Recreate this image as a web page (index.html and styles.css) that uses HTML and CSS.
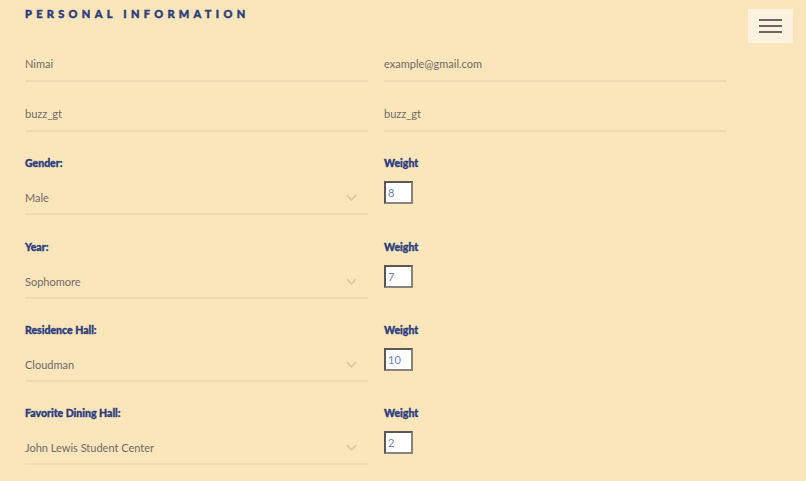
FILE: index.html
```html
<!DOCTYPE html>
<html>
<head>
<meta charset="utf-8">
<link rel="stylesheet" href="styles.css">
</head>
<body>
<div class="page">
  <h2 class="title">PERSONAL INFORMATION</h2>
  <div class="pair first">
    <div class="field">Nimai</div>
    <div class="field">example@gmail.com</div>
  </div>
  <div class="pair second">
    <div class="field">buzz_gt</div>
    <div class="field">buzz_gt</div>
  </div>

  <div class="pair group">
    <div>
      <div class="label">Gender:</div>
      <div class="select"><span>Male</span><svg class="chev" viewBox="0 0 12 7"><path d="M1 1 L6 6 L11 1"/></svg></div>
    </div>
    <div>
      <div class="label">Weight</div>
      <div class="weight">8</div>
    </div>
  </div>

  <div class="pair group">
    <div>
      <div class="label">Year:</div>
      <div class="select"><span>Sophomore</span><svg class="chev" viewBox="0 0 12 7"><path d="M1 1 L6 6 L11 1"/></svg></div>
    </div>
    <div>
      <div class="label">Weight</div>
      <div class="weight">7</div>
    </div>
  </div>

  <div class="pair group">
    <div>
      <div class="label">Residence Hall:</div>
      <div class="select"><span>Cloudman</span><svg class="chev" viewBox="0 0 12 7"><path d="M1 1 L6 6 L11 1"/></svg></div>
    </div>
    <div>
      <div class="label">Weight</div>
      <div class="weight">10</div>
    </div>
  </div>

  <div class="pair group">
    <div>
      <div class="label">Favorite Dining Hall:</div>
      <div class="select"><span>John Lewis Student Center</span><svg class="chev" viewBox="0 0 12 7"><path d="M1 1 L6 6 L11 1"/></svg></div>
    </div>
    <div>
      <div class="label">Weight</div>
      <div class="weight">2</div>
    </div>
  </div>
</div>
<button class="menu" aria-label="Menu"><span></span><span></span><span></span></button>
</body>
</html>
```
FILE: styles.css
```css
html, body {
  margin: 0;
  padding: 0;
  background: #fbe5bb;
  font-family: Lato, "Liberation Sans", sans-serif;
  overflow: hidden;
}
.page {
  padding: 7px 0 0 25px;
}
.title {
  margin: 0;
  font-size: 11px;
  line-height: 14px;
  font-weight: 900;
  letter-spacing: 4.3px;
  color: #2b3d7d;
  -webkit-text-stroke: 0.45px #2b3d7d;
}
.pair {
  display: grid;
  grid-template-columns: 343px 343px;
  column-gap: 16px;
}
.pair.first { margin-top: 25px; }
.pair.second { margin-top: 14px; }
.pair.group { margin-top: 23.3px; }
.field {
  height: 26px;
  display: flex;
  align-items: flex-end;
  padding-bottom: 8px;
  border-bottom: 2px solid #efd9b2;
  font-size: 11px;
  line-height: 16px;
  color: #6f6b66;
}
.label {
  font-size: 10.5px;
  line-height: 16px;
  font-weight: 900;
  color: #2b3d7d;
  -webkit-text-stroke: 0.35px #2b3d7d;
}
.select {
  height: 35px;
  padding-bottom: 7px;
  display: flex;
  align-items: flex-end;
  justify-content: space-between;
  border-bottom: 2px solid #efd9b2;
  font-size: 11px;
  line-height: 16px;
  color: #6f6b66;
}
.chev {
  width: 11px;
  height: 7px;
  margin: 0 11px 5px 0;
  fill: none;
  stroke: #dac9a6;
  stroke-width: 2;
}
.weight {
  margin-top: 10px;
  width: 29px;
  height: 23px;
  box-sizing: border-box;
  background: #ffffff;
  border: 2px solid #5b5751;
  border-right-color: #8a857c;
  border-bottom-color: #8a857c;
  font-size: 11px;
  line-height: 19px;
  padding-left: 2px;
  color: #6c7fbd;
}
.menu {
  position: absolute;
  top: 9px;
  left: 748px;
  width: 45px;
  height: 34px;
  border: none;
  background: #fdf2df;
  padding: 0;
  display: flex;
  flex-direction: column;
  justify-content: center;
  align-items: center;
  gap: 4px;
}
.menu span {
  display: block;
  width: 23px;
  height: 2px;
  background: #6a6661;
}
```
